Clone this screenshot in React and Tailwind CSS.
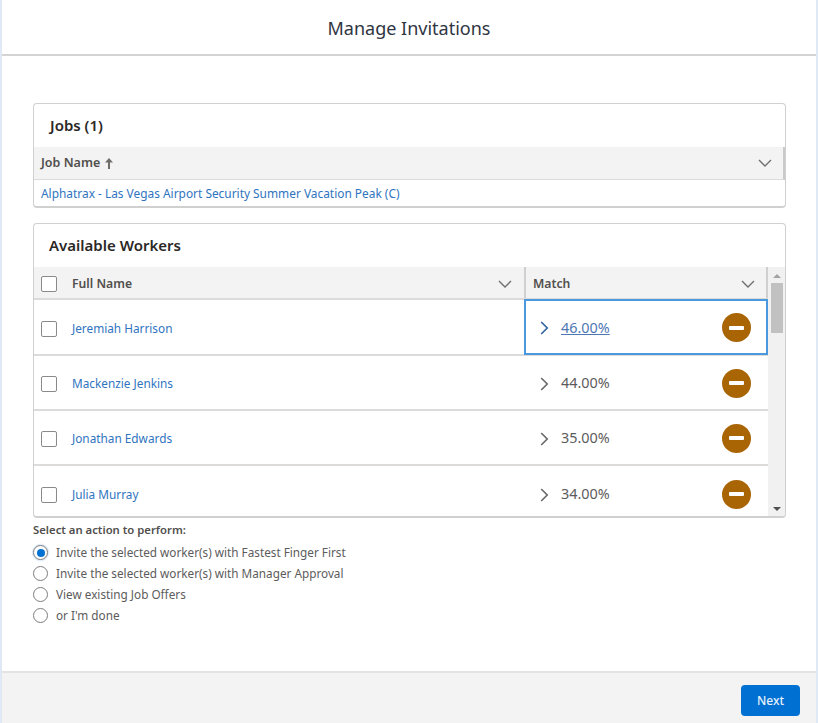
import React from 'react'

const workers = [
  { name:'Jeremiah Harrison', match:'46.00%', active:true, row:'h-[56px] border-b-2 border-[#dddbda]' },
  { name:'Mackenzie Jenkins', match:'44.00%', row:'h-[55px] border-b-2 border-[#dddbda]' },
  { name:'Jonathan Edwards', match:'35.00%', row:'h-[55px] border-b-2 border-[#dddbda]' },
  { name:'Julia Murray', match:'34.00%', row:'h-[55px]' },
]

const actions = [
  'Invite the selected worker(s) with Fastest Finger First',
  'Invite the selected worker(s) with Manager Approval',
  'View existing Job Offers',
  "or I'm done",
]

function ChevronDown({ className }) {
  return (
    <svg viewBox="0 0 14 8" className={className} fill="none" stroke="currentColor" strokeWidth="1.4">
      <path d="M1 1l6 6 6-6" />
    </svg>
  )
}

function ChevronRight({ className }) {
  return (
    <svg viewBox="0 0 9 14" className={className} fill="none" stroke="currentColor" strokeWidth="1.7">
      <path d="M1.2 1l6 6-6 6" />
    </svg>
  )
}

function Checkbox() {
  return <span className="block w-4 h-4 shrink-0 rounded-[2px] border border-[#8a8a8a] bg-white" />
}

function MinusBadge() {
  return (
    <span className="flex items-center justify-center w-[29px] h-[29px] rounded-full bg-[#a96404]">
      <span className="block w-[15px] h-[4px] rounded-[1px] bg-white" />
    </span>
  )
}

function WorkerRow({ worker }) {
  return (
    <div className={`flex ${worker.row}`}>
      <div className="flex-1 flex items-center pl-[7px] pt-[3px]">
        <Checkbox />
        <a className="ml-[15px] text-[11.8px] text-[#2f74c0]">{worker.name}</a>
      </div>
      <div className={`w-[244px] flex items-center pl-[14px] pr-[15px] ${worker.active ? 'border-2 border-[#4a98de] -mt-px h-[56px] pt-[1px]' : 'border-2 border-transparent pt-[1px]'}`}>
        <ChevronRight className={`w-[9px] h-[14px] mt-[1px] ${worker.active ? 'text-[#33659f]' : 'text-[#6b6b6b]'}`} />
        {worker.active
          ? <a className="ml-[12px] text-[14.4px] text-[#4f79b5] underline">{worker.match}</a>
          : <span className="ml-[12px] text-[14.4px] text-[#5c5c5c]">{worker.match}</span>}
        <span className="ml-auto"><MinusBadge /></span>
      </div>
    </div>
  )
}

export default function App() {
  return (
    <div className="w-[818px] h-[723px] overflow-hidden bg-white flex flex-col border-x-2 border-[#dfe8f5] text-[#3e3e3c]" style={{ fontFamily:'"Noto Sans","Open Sans",sans-serif' }}>
      <header className="h-[56px] shrink-0 flex items-center justify-center pt-[2px] border-b-2 border-[#d4d4d4]">
        <h1 className="text-[18px] text-[#2f3542]">Manage Invitations</h1>
      </header>

      <main className="flex-1 pt-[47px] pl-[31px] pr-[30px]">
        <section className="rounded-[4px] border border-[#d0d0d0] border-b-2 h-[105px] overflow-hidden">
          <h2 className="h-[43px] flex items-center pl-[16px] text-[15px] font-semibold text-[#2b2826]">Jobs (1)</h2>
          <div className="h-[33px] flex items-center pl-[7px] pr-[11px] bg-[#f3f3f3] border-b border-[#dddbda] border-r-2 border-r-[#c9c9c9]">
            <span className="text-[12.5px] font-semibold text-[#514f4d]">Job Name</span>
            <svg viewBox="0 0 8 11" className="ml-[5px] w-[8px] h-[11px] text-[#706e6b]" fill="currentColor">
              <path d="M4 0L8 4.5H5V11H3V4.5H0z" />
            </svg>
            <ChevronDown className="ml-auto w-[14px] h-[8px] text-[#6f6f6f]" />
          </div>
          <a className="block pl-[7px] pt-[5px] text-[11.9px] text-[#2f74c0]">Alphatrax - Las Vegas Airport Security Summer Vacation Peak (C)</a>
        </section>

        <section className="mt-[15px] rounded-[4px] border border-[#d0d0d0] border-b-2 h-[295px] overflow-hidden">
          <h2 className="h-[43px] flex items-center pl-[15px] text-[15px] font-semibold text-[#2b2826]">Available Workers</h2>
          <div className="flex h-[250px]">
            <div className="flex-1 min-w-0">
              <div className="flex h-[33px] bg-[#f3f3f3] border-b-2 border-[#dddbda]">
                <div className="flex-1 flex items-center pl-[7px] pr-[12px] pt-[3px]">
                  <Checkbox />
                  <span className="ml-[15px] text-[12.2px] font-semibold text-[#514f4d]">Full Name</span>
                  <ChevronDown className="ml-auto w-[14px] h-[8px] text-[#6f6f6f]" />
                </div>
                <div className="w-[244px] flex items-center pl-[7px] pr-[11px] pt-[3px] border-x-2 border-[#d0d0d0]">
                  <span className="text-[12.2px] font-semibold text-[#514f4d]">Match</span>
                  <ChevronDown className="ml-auto w-[14px] h-[8px] text-[#6f6f6f]" />
                </div>
              </div>
              {workers.map((w) => (
                <WorkerRow key={w.name} worker={w} />
              ))}
            </div>
            <div className="w-[17px] shrink-0 flex flex-col items-center bg-[#f1f1f1]">
              <span className="mt-[7px] w-0 h-0 border-x-[4px] border-x-transparent border-b-[4px] border-b-[#a3a3a3]" />
              <span className="mt-[5px] w-[12px] h-[50px] bg-[#c1c1c1]" />
              <span className="mt-auto mb-[6px] w-0 h-0 border-x-[4px] border-x-transparent border-t-[4px] border-t-[#505050]" />
            </div>
          </div>
        </section>

        <p className="mt-[4px] text-[11.3px] font-semibold leading-[15px] text-[#514f4d]">Select an action to perform:</p>
        <ul className="mt-[5px]">
          {actions.map((a, i) => (
            <li key={a} className="flex items-center h-[21px]">
              <span className={`flex items-center justify-center w-[15px] h-[15px] rounded-full border border-[#7d7d7d] ${i === 0 ? 'shadow-[0_0_2px_#7aa7d8]' : ''}`}>
                {i === 0 && <span className="block w-[8px] h-[8px] rounded-full bg-[#0070d2]" />}
              </span>
              <span className="ml-[8px] text-[11.75px] text-[#5c5c5c]">{a}</span>
            </li>
          ))}
        </ul>
      </main>

      <footer className="h-[52px] shrink-0 flex items-start justify-end pt-[12px] pr-[16px] bg-[#f3f3f3] border-t-2 border-[#e3e3e3]">
        <button className="w-[59px] h-[31px] rounded-[4px] bg-[#0070d2] text-[12px] font-medium text-[#e8f2fb]">Next</button>
      </footer>
    </div>
  )
}
